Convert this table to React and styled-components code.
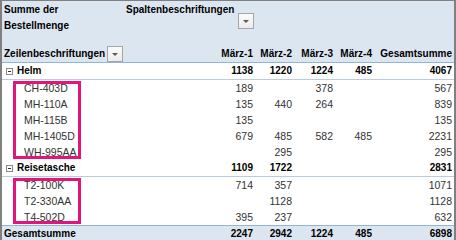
import React from 'react';
import styled, { createGlobalStyle } from 'styled-components';

const GlobalStyle = createGlobalStyle`
  body {
    margin: 0;
    background: #fff;
    font-family: "Liberation Sans", Arial, sans-serif;
  }
`;

const COLS = '211px 42px 39px 41px 39px 80px';

const Frame = styled.div`
  width: 456px;
  height: 240px;
  box-sizing: border-box;
  border: 2px solid #808080;
  border-top-width: 1px;
  border-bottom: 0;
  overflow: hidden;
  background: #fff;
  color: #000;
`;

const Header = styled.div`
  background: #dce6f1;
  border-bottom: 1px solid #95b3d7;
`;

const HeaderTop = styled.div`
  display: flex;
  align-items: flex-start;
  height: 45px;
`;

const Title = styled.div`
  width: 122px;
  padding: 1px 0 0 2px;
  font-size: 10px;
  font-weight: bold;
  line-height: 16px;
`;

const ColumnLabel = styled.div`
  padding-top: 1px;
  font-size: 10px;
  font-weight: bold;
  line-height: 16px;
  white-space: nowrap;
`;

const FilterButton = styled.div`
  width: 16px;
  height: 16px;
  box-sizing: border-box;
  margin-left: ${(p) => p.$gap || 4}px;
  margin-top: ${(p) => p.$top || 0}px;
  border: 1px solid #a6a6a6;
  background: linear-gradient(#fbfbfb, #ececec);
  display: flex;
  align-items: center;
  justify-content: center;
  flex-shrink: 0;

  &::after {
    content: '';
    border-left: 3px solid transparent;
    border-right: 3px solid transparent;
    border-top: 3px solid #595959;
  }
`;

const Row = styled.div`
  display: grid;
  grid-template-columns: ${COLS};
  height: 16px;
  line-height: 16px;
  font-size: ${(p) => (p.$bold ? '10px' : '10.5px')};
  font-weight: ${(p) => (p.$bold ? 'bold' : 'normal')};
  color: ${(p) => (p.$bold ? '#000' : '#333')};
  background: ${(p) => (p.$total ? '#dce6f1' : 'transparent')};
  border-top: ${(p) => (p.$total ? '1px solid #95b3d7' : '0')};
  border-bottom: ${(p) => (p.$line ? '1px solid #b8cce4' : '0')};
  white-space: nowrap;
`;

const Label = styled.div`
  display: flex;
  align-items: center;
  padding-left: ${(p) => p.$indent || 2}px;
`;

const Num = styled.div`
  text-align: right;
  padding-right: 2px;
`;

const Toggle = styled.span`
  width: 7px;
  height: 7px;
  box-sizing: border-box;
  border: 1px solid #8a8a8a;
  background: #fff;
  margin: 0 4px 0 2px;
  display: inline-flex;
  align-items: center;
  justify-content: center;

  &::after {
    content: '';
    width: 3px;
    height: 1px;
    background: #333;
  }
`;

const Group = styled.div`
  position: relative;
`;

const Highlight = styled.div`
  position: absolute;
  left: 11px;
  top: 1px;
  bottom: 1px;
  width: 68px;
  box-sizing: border-box;
  border: 3px solid #e5147d;
  pointer-events: none;
`;

const MONTHS = ['März-1', 'März-2', 'März-3', 'März-4'];

const groups = [
  {
    name: 'Helm',
    values: [1138, 1220, 1224, 485, 4067],
    items: [
      ['CH-403D', [189, '', 378, '', 567]],
      ['MH-110A', [135, 440, 264, '', 839]],
      ['MH-115B', [135, '', '', '', 135]],
      ['MH-1405D', [679, 485, 582, 485, 2231]],
      ['WH-995AA', ['', 295, '', '', 295]],
    ],
  },
  {
    name: 'Reisetasche',
    values: [1109, 1722, '', '', 2831],
    items: [
      ['T2-100K', [714, 357, '', '', 1071]],
      ['T2-330AA', ['', 1128, '', '', 1128]],
      ['T4-502D', [395, 237, '', '', 632]],
    ],
  },
];

const total = [2247, 2942, 1224, 485, 6898];

function Values({ values }) {
  return values.map((v, i) => <Num key={i}>{v}</Num>);
}

export default function App() {
  return (
    <>
      <GlobalStyle />
      <Frame>
        <Header>
          <HeaderTop>
            <Title>
              Summe der
              <br />
              Bestellmenge
            </Title>
            <ColumnLabel>Spaltenbeschriftungen</ColumnLabel>
            <FilterButton $gap={4} $top={12} />
          </HeaderTop>
          <Row $bold>
            <Label>
              Zeilenbeschriftungen
              <FilterButton $gap={2} />
            </Label>
            {MONTHS.map((m) => (
              <Num key={m}>{m}</Num>
            ))}
            <Num>Gesamtsumme</Num>
          </Row>
        </Header>

        {groups.map((g) => (
          <React.Fragment key={g.name}>
            <Row $bold $line>
              <Label $indent={0}>
                <Toggle />
                {g.name}
              </Label>
              <Values values={g.values} />
            </Row>
            <Group>
              {g.items.map(([name, vals]) => (
                <Row key={name}>
                  <Label $indent={22}>{name}</Label>
                  <Values values={vals} />
                </Row>
              ))}
              <Highlight />
            </Group>
          </React.Fragment>
        ))}

        <Row $bold $total>
          <Label>Gesamtsumme</Label>
          <Values values={total} />
        </Row>
      </Frame>
    </>
  );
}
